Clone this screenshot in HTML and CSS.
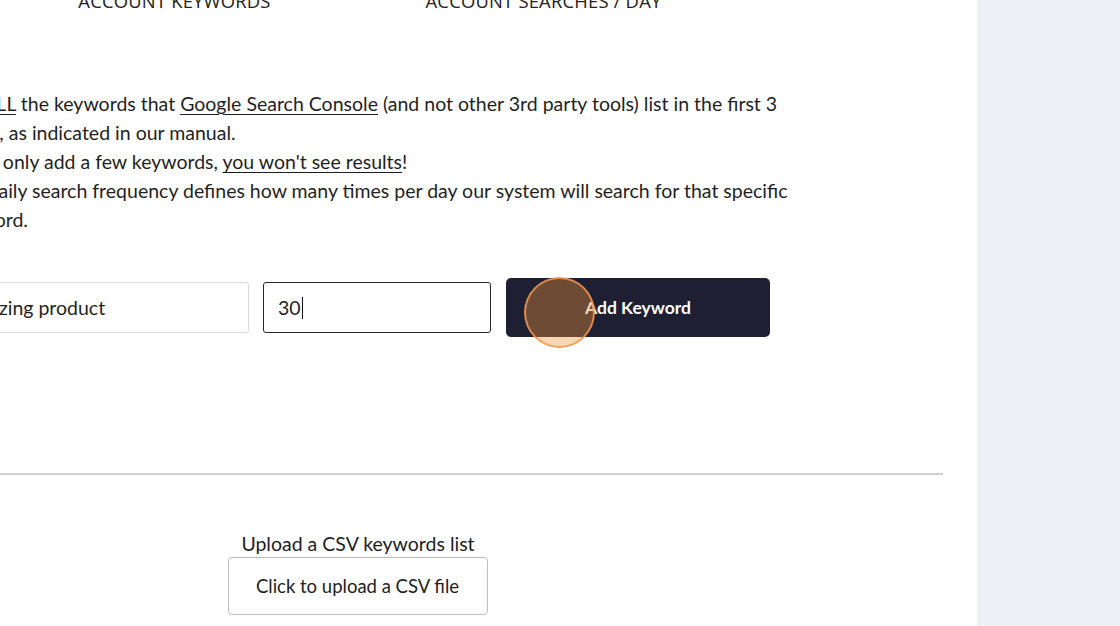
FILE: index.html
```html
<!DOCTYPE html>
<html lang="en">
<head>
<meta charset="utf-8">
<title>Keywords</title>
<link rel="stylesheet" href="styles.css">
</head>
<body>
<div class="page">
  <main class="main">
    <div class="content">
      <div class="stats">
        <div class="stat">ACCOUNT KEYWORDS</div>
        <div class="stat">ACCOUNT SEARCHES / DAY</div>
      </div>

      <div class="notes">
        <p class="first">Add <u>ALL</u> the keywords that <u>Google Search Console</u> (and not other 3rd party tools) list in the first 3<br>pages, as indicated in our manual.</p>
        <p>If you only add a few keywords, <u>you won't see results</u>!</p>
        <p>The daily search frequency defines how many times per day our system will search for that specific<br>keyword.</p>
      </div>

      <form class="add-row">
        <input class="field field-keyword" type="text" value="Amazing product">
        <div class="field field-freq">30<span class="caret"></span></div>
        <button class="add-btn" type="button">Add Keyword<span class="click-dot"></span></button>
      </form>

      <hr class="divider">

      <div class="upload">
        <div class="upload-label">Upload a CSV keywords list</div>
        <div class="upload-btn">Click to upload a CSV file</div>
      </div>
    </div>
  </main>
  <aside class="side"></aside>
</div>
</body>
</html>
```
FILE: styles.css
```css
* { box-sizing: border-box; }
html, body { margin: 0; padding: 0; height: 100%; }
body {
  font-family: Lato, "Noto Sans", sans-serif;
  color: #1d1d1f;
  background: #ffffff;
  overflow: hidden;
}
.page {
  display: flex;
  height: 626px;
}
.main {
  width: 977px;
  flex: none;
  background: #ffffff;
  overflow: hidden;
  padding-right: 34px;
}
.side {
  flex: 1;
  background: #eef0f5;
}
.content {
  margin-left: -45px;
}
.stats {
  display: flex;
  margin-top: -9px;
  margin-left: 35px;
}
.stat {
  width: 369px;
  text-align: center;
  font-family: "Open Sans", "Noto Sans", sans-serif;
  font-size: 18.4px;
  line-height: 20px;
  color: #222;
  letter-spacing: 0.2px;
}
.notes {
  margin-top: 78px;
  font-size: 19.5px;
  line-height: 29px;
  color: #1f1f1f;
  margin-left: -5px;
}
.notes p { margin: 0; }
.notes p.first { text-indent: -6px; }
.notes u { text-underline-offset: 3px; text-decoration-thickness: 1px; }

.add-row {
  display: flex;
  align-items: center;
  gap: 14px;
  margin: 44px 0 0 -5px;
}
.field {
  height: 51px;
  border-radius: 3px;
  font: inherit;
  font-size: 19.5px;
  padding: 0 14px;
  color: #1f1f1f;
  background: #fff;
  display: flex;
  align-items: center;
}
.field-keyword {
  width: 299px;
  border: 1px solid #d6d9dd;
  padding-left: 9px;
}
.field-freq {
  width: 228px;
  border: 1.5px solid #262626;
}
.caret {
  display: inline-block;
  width: 1px;
  height: 22px;
  background: #111;
  margin-left: 1px;
}
.add-btn {
  position: relative;
  margin-left: 1px;
  width: 264px;
  height: 59px;
  border: none;
  border-radius: 5px;
  background: #1e1f33;
  color: #fff;
  font-family: inherit;
  font-weight: 700;
  font-size: 17.5px;
}
.click-dot {
  position: absolute;
  left: 18px;
  top: -1px;
  width: 71px;
  height: 71px;
  border-radius: 50%;
  background: rgba(240, 147, 56, 0.38);
  border: 2.5px solid rgba(242, 150, 80, 0.85);
}
.divider {
  border: none;
  height: 2px;
  background: #d0d0d0;
  margin: 136px 0 0 0;
}
.upload {
  display: flex;
  flex-direction: column;
  align-items: center;
  width: 806px;
  margin-top: 57px;
}
.upload-label {
  font-size: 19.5px;
  line-height: 24px;
}
.upload-btn {
  margin-top: 1px;
  width: 260px;
  height: 58px;
  border: 1px solid #bdbdbd;
  border-radius: 4px;
  display: flex;
  align-items: center;
  justify-content: center;
  font-size: 18.5px;
  color: #222;
  margin-left: -1px;
}
```
